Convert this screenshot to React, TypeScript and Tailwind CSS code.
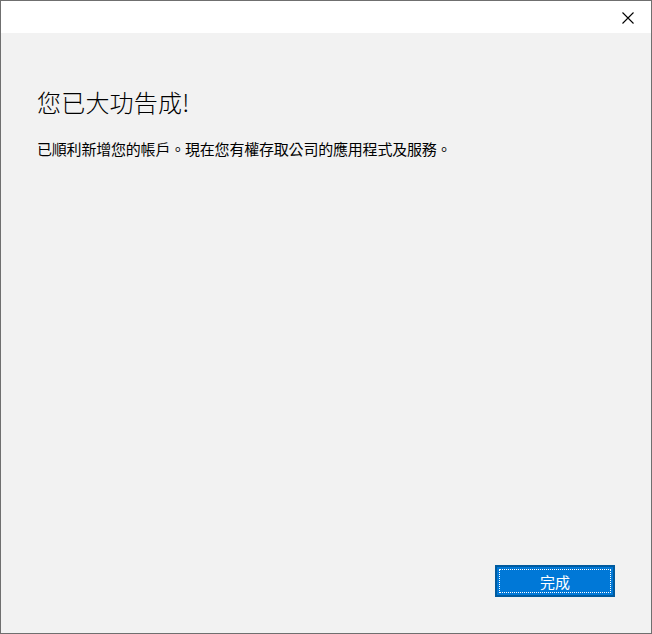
import React from 'react';

const font = { fontFamily: '"Noto Sans CJK TC", "Noto Sans", sans-serif' };

export default function App() {
  return (
    <div
      className="w-[652px] h-[634px] border border-[#6f6f6f] bg-[#f2f2f2] flex flex-col text-black"
      style={font}
    >
      {/* title bar */}
      <div className="h-[32px] bg-white flex justify-end shrink-0">
        <div className="w-[46px] h-full flex items-center justify-center">
          <svg width="12" height="12" viewBox="0 0 12 12" className="mt-[2px] mr-[1px]">
            <path d="M0.5 0.5 L11.5 11.5 M11.5 0.5 L0.5 11.5" stroke="#000" strokeWidth="1.1" fill="none" />
          </svg>
        </div>
      </div>

      <div className="flex-1 flex flex-col px-[36px]">
        <h1 className="mt-[53px] text-[24px] leading-[32px] font-light tracking-[0.2px]">您已大功告成!</h1>
        <p className="mt-[21px] text-[15px] leading-[20px] tracking-[-0.2px]">
          已順利新增您的帳戶。現在您有權存取公司的應用程式及服務。
        </p>

        <div className="flex-1" />

        <div className="flex justify-end mb-[36px]">
          <button className="w-[120px] h-[32px] bg-[#0078d7] border-2 border-[#005a9e] p-[2px]">
            <div className="w-full h-full border border-dotted border-white flex items-center justify-center text-white text-[15px] leading-none">
              完成
            </div>
          </button>
        </div>
      </div>
    </div>
  );
}
